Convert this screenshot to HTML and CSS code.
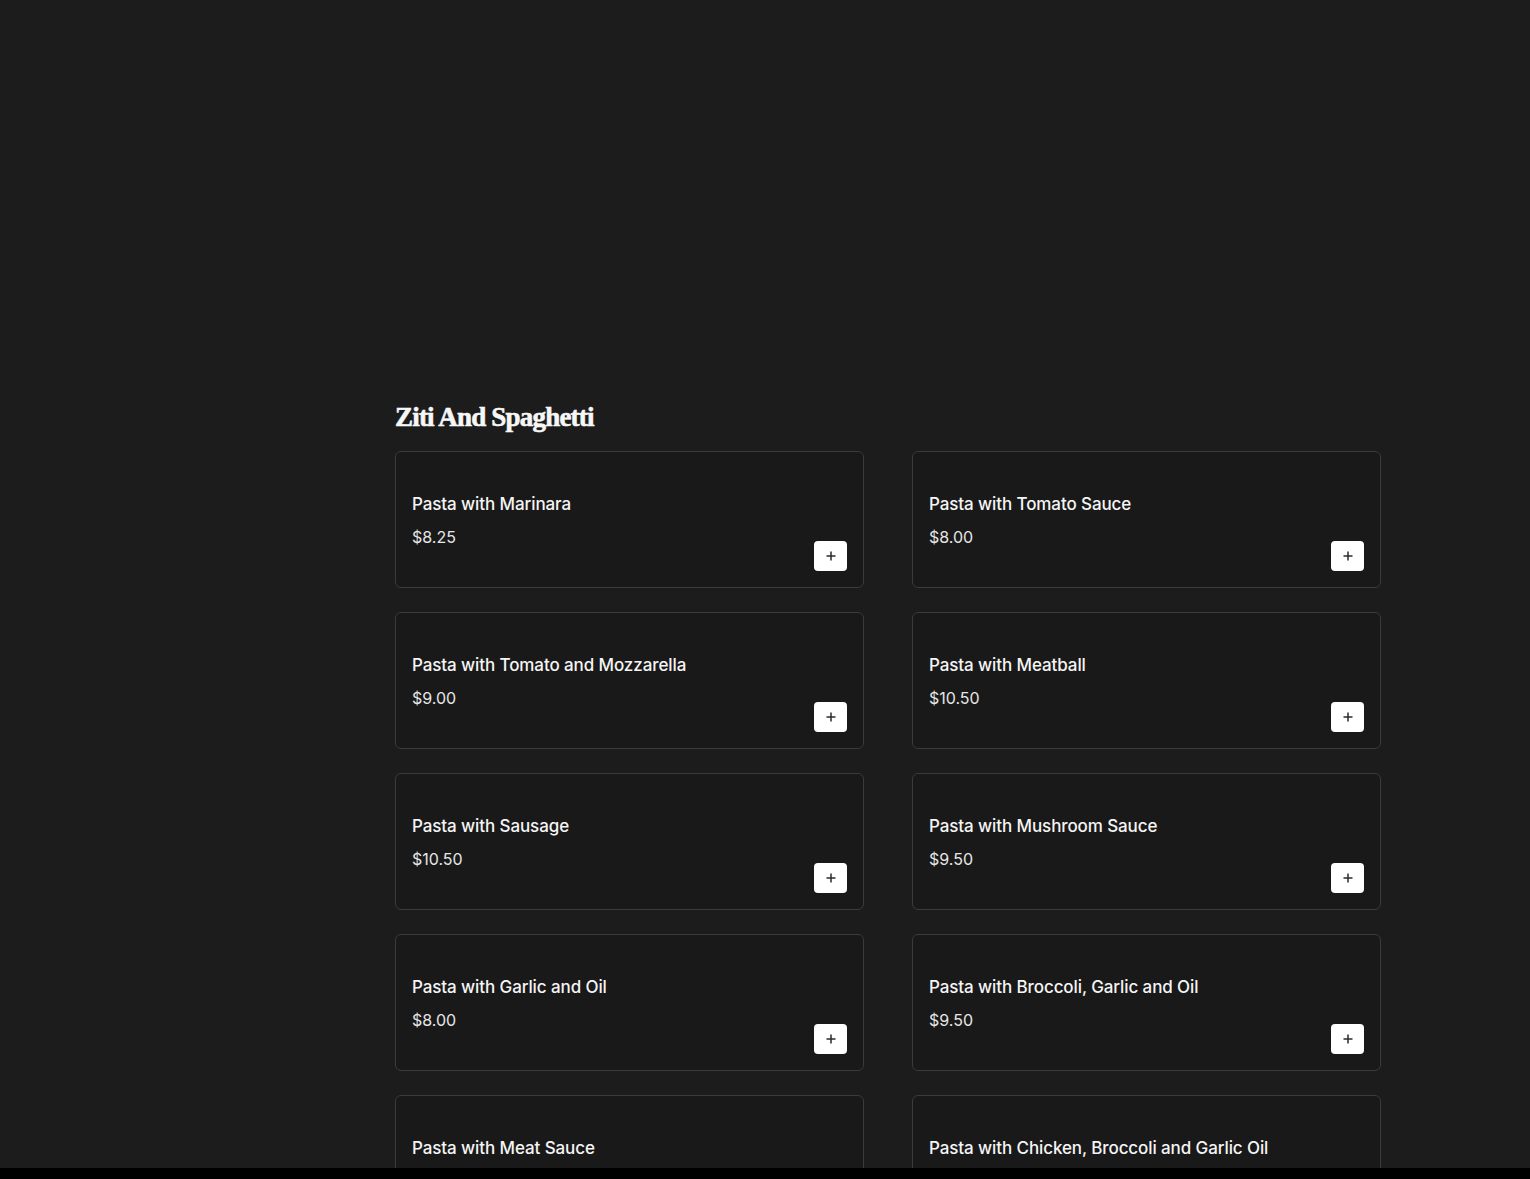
FILE: index.html
```html
<!DOCTYPE html>
<html lang="en">
<head>
    <meta charset="UTF-8">
    <meta name="viewport" content="width=device-width, initial-scale=1.0">
    <title>Menu - Ziti And Spaghetti</title>
    <link rel="stylesheet" href="styles.css">
</head>
<body>
    <div class="page">
        <div class="hero"></div>

        <section class="menu-section">
            <h2 class="section-title">Ziti And Spaghetti</h2>

            <div class="item-grid">
                <div class="item-card">
                    <div class="item-info">
                        <h3 class="item-name">Pasta with Marinara</h3>
                        <p class="item-price">$8.25</p>
                    </div>
                    <button class="add-btn" aria-label="Add">
                        <svg viewBox="0 0 12 12" width="12" height="12"><path d="M6 1.5v9M1.5 6h9" stroke="#2b2b2b" stroke-width="1.5"/></svg>
                    </button>
                </div>
                <div class="item-card">
                    <div class="item-info">
                        <h3 class="item-name">Pasta with Tomato Sauce</h3>
                        <p class="item-price">$8.00</p>
                    </div>
                    <button class="add-btn" aria-label="Add">
                        <svg viewBox="0 0 12 12" width="12" height="12"><path d="M6 1.5v9M1.5 6h9" stroke="#2b2b2b" stroke-width="1.5"/></svg>
                    </button>
                </div>
                <div class="item-card">
                    <div class="item-info">
                        <h3 class="item-name">Pasta with Tomato and Mozzarella</h3>
                        <p class="item-price">$9.00</p>
                    </div>
                    <button class="add-btn" aria-label="Add">
                        <svg viewBox="0 0 12 12" width="12" height="12"><path d="M6 1.5v9M1.5 6h9" stroke="#2b2b2b" stroke-width="1.5"/></svg>
                    </button>
                </div>
                <div class="item-card">
                    <div class="item-info">
                        <h3 class="item-name">Pasta with Meatball</h3>
                        <p class="item-price">$10.50</p>
                    </div>
                    <button class="add-btn" aria-label="Add">
                        <svg viewBox="0 0 12 12" width="12" height="12"><path d="M6 1.5v9M1.5 6h9" stroke="#2b2b2b" stroke-width="1.5"/></svg>
                    </button>
                </div>
                <div class="item-card">
                    <div class="item-info">
                        <h3 class="item-name">Pasta with Sausage</h3>
                        <p class="item-price">$10.50</p>
                    </div>
                    <button class="add-btn" aria-label="Add">
                        <svg viewBox="0 0 12 12" width="12" height="12"><path d="M6 1.5v9M1.5 6h9" stroke="#2b2b2b" stroke-width="1.5"/></svg>
                    </button>
                </div>
                <div class="item-card">
                    <div class="item-info">
                        <h3 class="item-name">Pasta with Mushroom Sauce</h3>
                        <p class="item-price">$9.50</p>
                    </div>
                    <button class="add-btn" aria-label="Add">
                        <svg viewBox="0 0 12 12" width="12" height="12"><path d="M6 1.5v9M1.5 6h9" stroke="#2b2b2b" stroke-width="1.5"/></svg>
                    </button>
                </div>
                <div class="item-card">
                    <div class="item-info">
                        <h3 class="item-name">Pasta with Garlic and Oil</h3>
                        <p class="item-price">$8.00</p>
                    </div>
                    <button class="add-btn" aria-label="Add">
                        <svg viewBox="0 0 12 12" width="12" height="12"><path d="M6 1.5v9M1.5 6h9" stroke="#2b2b2b" stroke-width="1.5"/></svg>
                    </button>
                </div>
                <div class="item-card">
                    <div class="item-info">
                        <h3 class="item-name">Pasta with Broccoli, Garlic and Oil</h3>
                        <p class="item-price">$9.50</p>
                    </div>
                    <button class="add-btn" aria-label="Add">
                        <svg viewBox="0 0 12 12" width="12" height="12"><path d="M6 1.5v9M1.5 6h9" stroke="#2b2b2b" stroke-width="1.5"/></svg>
                    </button>
                </div>
                <div class="item-card">
                    <div class="item-info">
                        <h3 class="item-name">Pasta with Meat Sauce</h3>
                        <p class="item-price">$10.50</p>
                    </div>
                    <button class="add-btn" aria-label="Add">
                        <svg viewBox="0 0 12 12" width="12" height="12"><path d="M6 1.5v9M1.5 6h9" stroke="#2b2b2b" stroke-width="1.5"/></svg>
                    </button>
                </div>
                <div class="item-card">
                    <div class="item-info">
                        <h3 class="item-name">Pasta with Chicken, Broccoli and Garlic Oil</h3>
                        <p class="item-price">$12.50</p>
                    </div>
                    <button class="add-btn" aria-label="Add">
                        <svg viewBox="0 0 12 12" width="12" height="12"><path d="M6 1.5v9M1.5 6h9" stroke="#2b2b2b" stroke-width="1.5"/></svg>
                    </button>
                </div>
            </div>
        </section>
    </div>

    <div class="bottom-bar"></div>
</body>
</html>
```

FILE: styles.css
```css
* {
    margin: 0;
    padding: 0;
    box-sizing: border-box;
}

body {
    font-family: 'Inter', 'Liberation Sans', sans-serif;
    background: #1c1c1c;
    color: #f2f2f2;
}

.page {
    padding-left: 395px;
}

.hero {
    height: 396px;
}

.menu-section {
    width: 986px;
}

.section-title {
    font-family: 'Liberation Serif', serif;
    font-weight: bold;
    font-size: 27px;
    line-height: 42px;
    letter-spacing: -0.8px;
    color: #f7f7f7;
    -webkit-text-stroke: 0.6px #f7f7f7;
    margin-bottom: 13px;
}

.item-grid {
    display: grid;
    grid-template-columns: 1fr 1fr;
    column-gap: 48px;
    row-gap: 24px;
}

.item-card {
    height: 137px;
    background: #191919;
    border: 1px solid #3b3b3b;
    border-radius: 6px;
    padding: 16px;
    display: flex;
    align-items: center;
}

.item-info {
    flex: 1;
    padding-top: 1px;
}

.item-name {
    font-size: 17px;
    font-weight: 500;
    line-height: 25px;
    color: #f5f5f5;
    letter-spacing: -0.1px;
}

.item-price {
    font-size: 16px;
    font-weight: 400;
    line-height: 24px;
    margin-top: 8px;
    color: #e6e6e6;
}

.add-btn {
    align-self: flex-end;
    width: 33px;
    height: 30px;
    background: #ffffff;
    border: none;
    border-radius: 4px;
    display: flex;
    align-items: center;
    justify-content: center;
    cursor: pointer;
}

.bottom-bar {
    position: fixed;
    left: 0;
    right: 0;
    bottom: 0;
    height: 11px;
    background: #000000;
}
```
